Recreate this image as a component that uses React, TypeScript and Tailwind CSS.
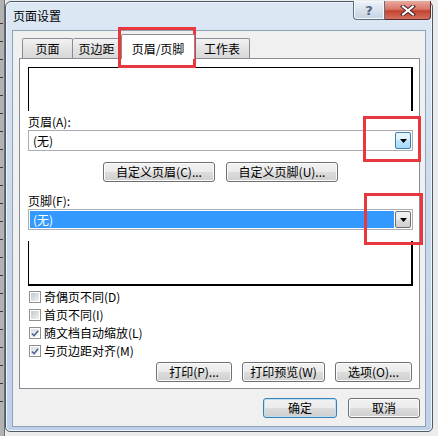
import React from "react";

const FONT = "font-['Noto_Sans_CJK_SC','Noto_Sans',sans-serif]";

function Btn({ className, children, def }: { className: string; children: React.ReactNode; def?: boolean }) {
  return (
    <div
      className={
        "flex items-center justify-center h-[20px] rounded-[3px] border text-[12px] leading-none text-black bg-[linear-gradient(#f2f2f2_0%,#ebebeb_50%,#dddddd_50%,#cfcfcf_100%)] " +
        (def
          ? "border-[#3c7fb1] shadow-[inset_0_0_0_1px_#b9e0f6] "
          : "border-[#707070] shadow-[inset_0_0_0_1px_#fbfbfb] ") +
        className
      }
    >
      {children}
    </div>
  );
}

function Arrow() {
  return (
    <svg width="7" height="4" viewBox="0 0 7 4">
      <path d="M0 0H7L3.5 4Z" fill="#000" />
    </svg>
  );
}

function Check({ checked }: { checked?: boolean }) {
  return (
    <div className="w-[12px] h-[12px] border border-[#8e8f8f] bg-white p-px shrink-0">
      <div
        className={
          "w-full h-full flex items-center justify-center " +
          (checked
            ? "bg-linear-to-br from-[#d8dde4] to-[#fbfbfb]"
            : "bg-linear-to-br from-[#c5c8cc] to-[#f1f1f1]")
        }
      >
        {checked && (
          <svg width="9" height="9" viewBox="0 0 9 9">
            <path d="M1 4.5L3.5 7L8 1.5" fill="none" stroke="#4a5f8c" strokeWidth="1.7" />
          </svg>
        )}
      </div>
    </div>
  );
}

function Row({ checked, label }: { checked?: boolean; label: string }) {
  return (
    <div className="h-[18px] flex items-center pl-px gap-[3px]">
      <Check checked={checked} />
      <span className="text-[12px] leading-none text-black">{label}</span>
    </div>
  );
}

export default function App() {
  return (
    <div className={"relative w-[438px] h-[436px] bg-[#ececec] flex overflow-hidden " + FONT}>
      {/* background sliver */}
      <div className="w-[5px] h-full bg-[#b2b2b2] border-r border-[#6d6d6d] flex flex-col gap-[17px] pt-[23px]">
        {Array.from({ length: 22 }).map((_, i) => (
          <div key={i} className="h-px w-[3px] bg-[#3a3a3a]" />
        ))}
      </div>

      {/* window */}
      <div className="mt-px w-[428px] h-[431px] rounded-t-[6px] rounded-b-[5px] border border-[#4d5a69] bg-linear-to-b from-[#dde8f5] via-[#c9d9ec] to-[#bfd1e8] flex flex-col px-[6px] shadow-[inset_0_0_0_1px_#eef4fb]">
        {/* title bar */}
        <div className="h-[28px] flex justify-between items-start -mx-[6px]">
          <div className="pl-[7px] pt-[7px] text-[12px] leading-[14px] text-black">页面设置</div>
          <div className="flex -mt-px mr-px">
            <div className="w-[32px] h-[19px] border border-[#5f6d7e] border-t-0 rounded-bl-[4px] bg-linear-to-b from-[#edf2f8] to-[#c3d2e3] flex items-center justify-center shadow-[inset_0_0_0_1px_#f5f8fc]">
              <span className="text-[13px] font-bold leading-none text-[#56657a] font-['DejaVu_Sans',sans-serif]">?</span>
            </div>
            <div className="w-[46px] h-[19px] border border-[#5b2a2a] border-t-0 border-l-0 rounded-br-[4px] bg-[linear-gradient(#e9a99f_0%,#d8786a_45%,#c5422f_55%,#d2705f_100%)] flex items-center justify-center">
              <svg width="16" height="11" viewBox="0 0 16 11">
                <path d="M3 1.5L13 9.5M13 1.5L3 9.5" stroke="#472228" strokeWidth="4" strokeLinecap="square" />
                <path d="M3 1.5L13 9.5M13 1.5L3 9.5" stroke="#ffffff" strokeWidth="2" strokeLinecap="square" />
              </svg>
            </div>
          </div>
        </div>

        {/* client */}
        <div className="w-[414px] h-[397px] border border-[#8fa1b6] bg-[#f0f0f0] flex flex-col">
          {/* tabs */}
          <div className="h-[27px] ml-[6px] pl-[3px] flex items-end text-[12px] leading-none text-black">
            <div className="w-[51px] h-[20px] border border-b-0 border-[#898c95] rounded-t-[2px] bg-[linear-gradient(#f3f3f3,#e3e3e3_50%,#d8d8d8)] flex items-center justify-center">
              页面
            </div>
            <div className="w-[48px] h-[20px] border border-b-0 border-l-0 border-[#898c95] rounded-t-[2px] bg-[linear-gradient(#f3f3f3,#e3e3e3_50%,#d8d8d8)] flex items-center justify-center">
              页边距
            </div>
            <div className="relative z-10 -mb-px w-[74px] h-[25px] border border-b-0 border-[#898c95] rounded-t-[2px] bg-white flex items-center justify-center pt-[3px]">
              页眉/页脚
            </div>
            <div className="w-[55px] h-[20px] border border-b-0 border-l-0 border-[#898c95] rounded-t-[2px] bg-[linear-gradient(#f3f3f3,#e3e3e3_50%,#d8d8d8)] flex items-center justify-center">
              工作表
            </div>
          </div>

          {/* panel */}
          <div className="ml-[6px] w-[401px] border border-[#898c95] bg-white pl-[8px] pr-[6px] pb-[6px] flex flex-col">
            <div className="mt-[8px] h-[44px] border-t border-l border-r-2 border-black" />

            <div className="mt-[4px] h-[14px] text-[12px] leading-[14px] text-black">页眉(A):</div>
            <div className="mt-px h-[21px] border border-[#abadb3] bg-white flex items-center justify-between">
              <span className="pl-[4px] text-[12px] leading-none text-black">(无)</span>
              <div className="w-[16px] h-[17px] mr-px border border-[#3c7fb1] rounded-[2px] bg-[linear-gradient(#eaf6fd_0%,#d9f0fc_50%,#bee6fd_50%,#a7d9f5_100%)] flex items-center justify-center">
                <Arrow />
              </div>
            </div>

            <div className="mt-[11px] flex justify-center gap-[11px]">
              <Btn className="w-[112px]">自定义页眉(C)...</Btn>
              <Btn className="w-[112px]">自定义页脚(U)...</Btn>
            </div>

            <div className="mt-[12px] h-[14px] text-[12px] leading-[14px] text-black">页脚(F):</div>
            <div className="mt-px h-[21px] border border-[#abadb3] bg-white flex items-stretch p-px gap-px">
              <div className="flex-1 bg-[#3399ff] text-white text-[12px] leading-none pl-[3px] flex items-center">(无)</div>
              <div className="w-[16px] border border-[#707070] rounded-[2px] bg-[linear-gradient(#f2f2f2_0%,#ebebeb_50%,#dddddd_50%,#cfcfcf_100%)] flex items-center justify-center">
                <Arrow />
              </div>
            </div>

            <div className="mt-[11px] h-[45px] border-l border-r-2 border-b-2 border-black" />

            <div className="mt-[2px] flex flex-col">
              <Row label="奇偶页不同(D)" />
              <Row label="首页不同(I)" />
              <Row checked label="随文档自动缩放(L)" />
              <Row checked label="与页边距对齐(M)" />
            </div>

            <div className="mt-[2px] flex justify-end gap-[10px] pr-px">
              <Btn className="w-[76px]">打印(P)...</Btn>
              <Btn className="w-[83px]">打印预览(W)</Btn>
              <Btn className="w-[77px]">选项(O)...</Btn>
            </div>
          </div>

          <div className="mt-[9px] flex justify-end gap-[11px] pr-[5px]">
            <Btn def className="w-[74px]">确定</Btn>
            <Btn className="w-[72px]">取消</Btn>
          </div>
        </div>
      </div>

      {/* annotation boxes */}
      <div className="absolute left-[118px] top-[27px] w-[78px] h-[41px] border-[3px] border-[#e8383d] pointer-events-none" />
      <div className="absolute left-[363px] top-[116px] w-[58px] h-[46px] border-[3px] border-[#e8383d] pointer-events-none" />
      <div className="absolute left-[364px] top-[193px] w-[59px] h-[52px] border-[3px] border-[#e8383d] pointer-events-none" />
    </div>
  );
}
